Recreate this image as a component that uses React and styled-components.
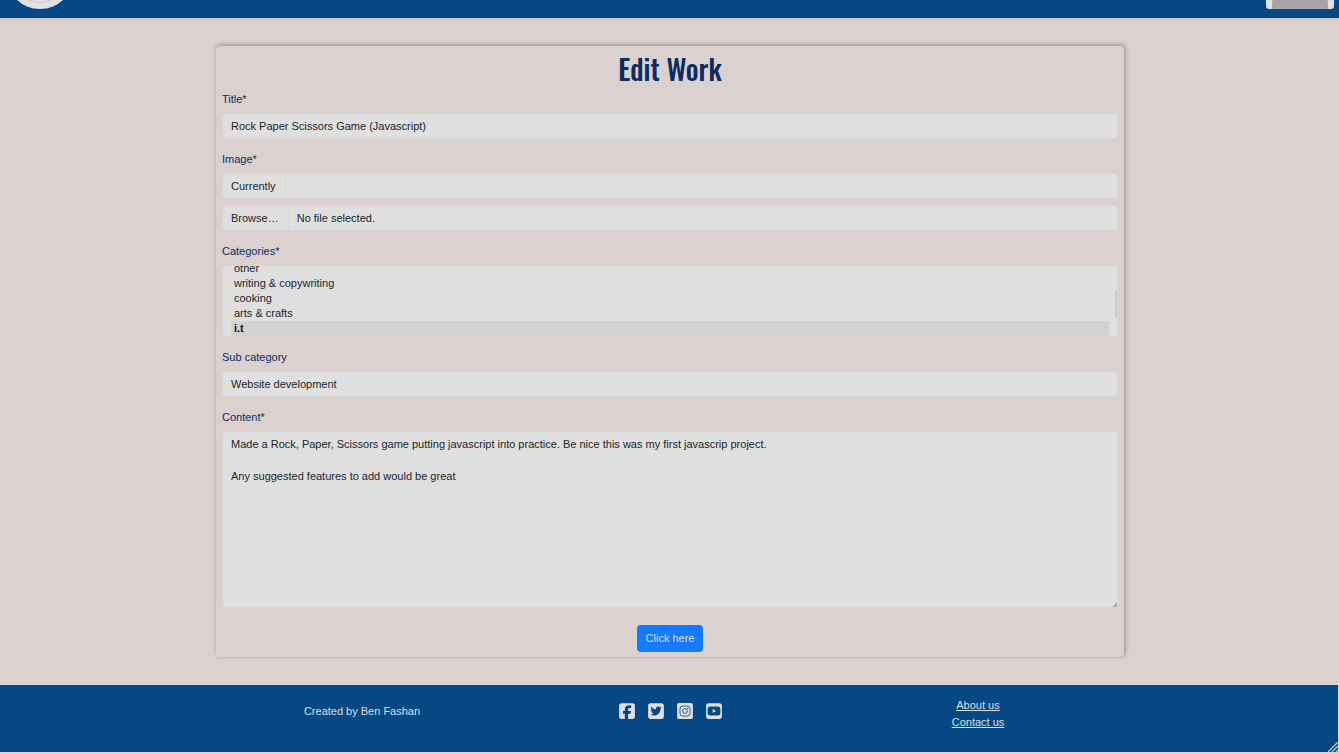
import React, { useLayoutEffect, useRef } from "react";
import styled, { createGlobalStyle } from "styled-components";
import { FaSquareFacebook, FaSquareTwitter, FaSquareYoutube } from "react-icons/fa6";

const colors = {
  page: "#dbd1cf",
  bar: "#064883",
  navy: "#0d2b63",
  field: "#e0e0e0",
  line: "#d6d9dc",
  text: "#212529",
  pale: "#dfdfe0",
  primary: "#147aff",
};

const GlobalStyle = createGlobalStyle`
  *, *::before, *::after { box-sizing: border-box; }
  body {
    margin: 0;
    background: ${colors.page};
    color: ${colors.text};
    font: 11px/16px "Liberation Sans", Arial, sans-serif;
  }
`;

const Page = styled.div`
  display: flex;
  flex-direction: column;
  min-height: 100vh;
`;

const TopBar = styled.header`
  display: flex;
  justify-content: space-between;
  align-items: flex-end;
  height: 18px;
  padding: 0 5px 9px 6px;
  overflow: hidden;
  background: ${colors.bar};
`;

const BarShadow = styled.div`
  height: 4px;
  background: linear-gradient(#cfc5c6, ${colors.page});
`;

const BarImage = styled.svg`
  display: block;
  flex: none;
  width: 68px;
  height: 68px;
`;

const Main = styled.main`
  flex: 1;
  padding: 24px 12px 28px 13px;
`;

const Card = styled.form`
  display: flex;
  flex-direction: column;
  gap: 12px;
  max-width: 908px;
  margin: 0 auto;
  padding: 0 6px 5px;
  border-radius: 4px;
  box-shadow: 1px -1px 4px rgba(70, 45, 50, 0.45);
  background: ${colors.page};
`;

const Heading = styled.h1`
  margin: 0 0 -12px;
  color: ${colors.navy};
  font: 500 28px/45px Oswald, "Liberation Sans Narrow", "Liberation Sans", sans-serif;
  text-align: center;
`;

const Field = styled.div`
  display: flex;
  flex-direction: column;
  gap: 6px;
`;

const Label = styled.label`
  color: ${colors.navy};
  font-weight: 500;
`;

const control = `
  display: block;
  width: 100%;
  margin: 0;
  border: 1px solid ${colors.line};
  border-radius: 4px;
  background: ${colors.field};
  color: ${colors.text};
  font: inherit;
  outline: none;
`;

const TextInput = styled.input`
  ${control}
  height: 26px;
  padding: 4px 8px;
`;

const TextArea = styled.textarea`
  ${control}
  height: 177px;
  padding: 4px 8px;
  resize: vertical;

  &::-webkit-resizer {
    background: linear-gradient(135deg, transparent 85%, #a9a9a9 85%);
  }
`;

const ListFrame = styled.div`
  position: relative;
`;

const ListThumb = styled.span`
  position: absolute;
  top: 25px;
  right: 1px;
  width: 2px;
  height: 28px;
  background: #cdcdcd;
  pointer-events: none;
`;

const ListBox = styled.select`
  ${control}
  height: 72px;
  padding: 0 8px;
  overflow-y: scroll;
  scrollbar-width: none;

  option {
    height: 15px;
    min-height: 15px;
    padding: 1px 3px 0;
    line-height: 14px;
  }
  option:checked {
    background: #d2d2d2 linear-gradient(#d2d2d2, #d2d2d2);
    color: #111;
    font-weight: 700;
  }
`;

const InputGroup = styled.div`
  ${control}
  display: flex;
  position: relative;
  height: 26px;
  overflow: hidden;
`;

const Addon = styled.span`
  padding: 4px 9px 4px 8px;
  border-right: 1px solid ${colors.line};
`;

const GroupText = styled.span`
  padding: 4px 8px;
`;

const FileInput = styled.input`
  position: absolute;
  inset: 0;
  width: 100%;
  opacity: 0;
  cursor: pointer;
`;

const SubmitButton = styled.button`
  align-self: center;
  height: 27px;
  margin-top: 5px;
  padding: 0 9px 1px;
  border: 0;
  border-radius: 4px;
  background: ${colors.primary};
  color: ${colors.pale};
  font: inherit;
  font-weight: 500;
  cursor: pointer;
`;

const Footer = styled.footer`
  position: relative;
  min-height: 69px;
  padding: 12px 0 12px 2px;
  border-right: 1px solid #d5d5d5;
  border-bottom: 2px solid #d5d5d5;
  background: ${colors.bar};
  color: ${colors.pale};
`;

const FooterGrid = styled.div`
  display: grid;
  grid-template-columns: repeat(3, 1fr);
  max-width: 924px;
  margin: 0 auto;
  line-height: 17px;
`;

const Credit = styled.p`
  margin: 6px 0 0;
  font-weight: 500;
  text-align: center;
`;

const Socials = styled.nav`
  display: flex;
  justify-content: center;
  gap: 11px;
  padding-top: 5px;
`;

const SocialLink = styled.a`
  display: flex;
  width: 18px;
  height: 18px;
  color: ${colors.pale};
  font-size: 18px;
`;

const FooterLinks = styled.nav`
  display: flex;
  flex-direction: column;
  align-items: center;
`;

const FooterLink = styled.a`
  color: ${colors.pale};
  font-weight: 500;
`;

const Grip = styled.svg`
  position: absolute;
  right: 0;
  bottom: 0;
  width: 10px;
  height: 10px;
`;

const categories = [
  "music",
  "photography",
  "design",
  "fitness",
  "other",
  "writing & copywriting",
  "cooking",
  "arts & crafts",
  "i.t",
  "business",
  "education",
];

function InstagramSquare() {
  return (
    <svg width="18" height="18" viewBox="0 0 18 18" aria-hidden="true">
      <rect x="1.1" y="1.1" width="15.8" height="15.8" rx="1.6" fill="currentColor" />
      <g fill="none" stroke={colors.bar} strokeWidth="0.8">
        <rect x="4" y="4" width="10" height="10" rx="2.8" />
        <circle cx="9" cy="9" r="2.4" />
      </g>
      <circle cx="11.7" cy="6.3" r="0.6" fill={colors.bar} />
    </svg>
  );
}

const socials = [
  ["Facebook", FaSquareFacebook],
  ["Twitter", FaSquareTwitter],
  ["Instagram", InstagramSquare],
  ["YouTube", FaSquareYoutube],
];

const content =
  "Made a Rock, Paper, Scissors game putting javascript into practice. Be nice this was my first javascrip project.\n\nAny suggested features to add would be great";

function CategorySelect() {
  const ref = useRef(null);
  useLayoutEffect(() => {
    const list = ref.current;
    const reveal = () => {
      list.scrollTop = 65;
    };
    reveal();
    const frame = requestAnimationFrame(reveal);
    return () => cancelAnimationFrame(frame);
  }, []);
  return (
    <ListFrame>
      <ListBox id="categories" ref={ref} multiple size={4} defaultValue={["i.t"]}>
        {categories.map((name) => (
          <option key={name} value={name}>
            {name}
          </option>
        ))}
      </ListBox>
      <ListThumb />
    </ListFrame>
  );
}

export default function App() {
  return (
    <Page>
      <GlobalStyle />
      <TopBar>
        <BarImage viewBox="0 0 68 68" role="img" aria-label="Logo">
          <circle cx="34" cy="34" r="34" fill="#e2e2e2" />
          <circle cx="34" cy="34" r="27.5" fill="none" stroke="#c4c4c4" />
        </BarImage>
        <BarImage viewBox="0 0 68 68" role="img" aria-label="Profile">
          <rect width="68" height="68" rx="3" fill="#e0e0e3" />
          <path d="M6 68Q6 56 8 52Q14 42 34 42Q54 42 60 52Q62 56 62 68Z" fill="#a5a5a5" />
        </BarImage>
      </TopBar>
      <BarShadow />
      <Main>
        <Card onSubmit={(event) => event.preventDefault()}>
          <Heading>Edit Work</Heading>
          <Field>
            <Label htmlFor="title">Title*</Label>
            <TextInput id="title" defaultValue="Rock Paper Scissors Game (Javascript)" />
          </Field>
          <Field>
            <Label htmlFor="image">Image*</Label>
            <InputGroup>
              <Addon>Currently</Addon>
            </InputGroup>
            <InputGroup>
              <Addon>Browse…</Addon>
              <GroupText>No file selected.</GroupText>
              <FileInput id="image" type="file" />
            </InputGroup>
          </Field>
          <Field>
            <Label htmlFor="categories">Categories*</Label>
            <CategorySelect />
          </Field>
          <Field>
            <Label htmlFor="subcategory">Sub category</Label>
            <TextInput id="subcategory" defaultValue="Website development" />
          </Field>
          <Field>
            <Label htmlFor="content">Content*</Label>
            <TextArea id="content" defaultValue={content} spellCheck={false} />
          </Field>
          <SubmitButton type="submit">Click here</SubmitButton>
        </Card>
      </Main>
      <Footer>
        <FooterGrid>
          <Credit>Created by Ben Fashan</Credit>
          <Socials>
            {socials.map(([name, Icon]) => (
              <SocialLink key={name} href="#" aria-label={name}>
                <Icon />
              </SocialLink>
            ))}
          </Socials>
          <FooterLinks>
            <FooterLink href="#">About us</FooterLink>
            <FooterLink href="#">Contact us</FooterLink>
          </FooterLinks>
        </FooterGrid>
        <Grip viewBox="0 0 10 10" aria-hidden="true">
          <path d="M0 10L10 0M4 10L10 4M8 10L10 8" stroke="#c9c9c9" strokeWidth="1.3" />
        </Grip>
      </Footer>
    </Page>
  );
}
